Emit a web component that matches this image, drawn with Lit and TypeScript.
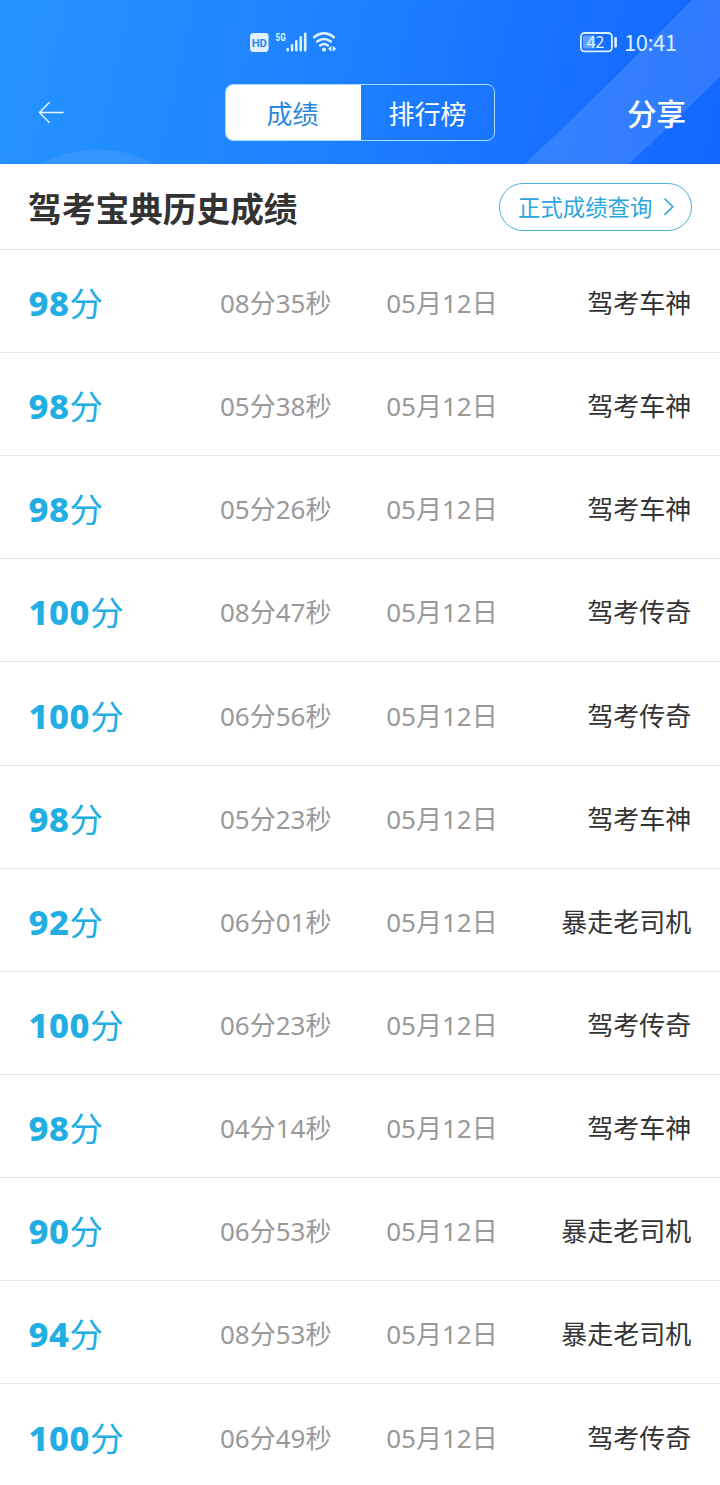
import { LitElement, html, css } from "lit";
import { customElement, property, state } from "lit/decorators.js";

interface Exam {
  score: number;
  time: string;
  date: string;
  title: string;
}

const DATE = "05月12日";
const GOD = "驾考车神";
const LEGEND = "驾考传奇";
const DRIVER = "暴走老司机";

const EXAMS: Exam[] = [
  { score: 98, time: "08分35秒", date: DATE, title: GOD },
  { score: 98, time: "05分38秒", date: DATE, title: GOD },
  { score: 98, time: "05分26秒", date: DATE, title: GOD },
  { score: 100, time: "08分47秒", date: DATE, title: LEGEND },
  { score: 100, time: "06分56秒", date: DATE, title: LEGEND },
  { score: 98, time: "05分23秒", date: DATE, title: GOD },
  { score: 92, time: "06分01秒", date: DATE, title: DRIVER },
  { score: 100, time: "06分23秒", date: DATE, title: LEGEND },
  { score: 98, time: "04分14秒", date: DATE, title: GOD },
  { score: 90, time: "06分53秒", date: DATE, title: DRIVER },
  { score: 94, time: "08分53秒", date: DATE, title: DRIVER },
  { score: 100, time: "06分49秒", date: DATE, title: LEGEND },
];

@customElement("status-bar")
class StatusBar extends LitElement {
  static styles = css`
    :host {
      display: flex;
      justify-content: space-between;
      height: 84px;
      padding: 0 43px 0 248px;
      box-sizing: border-box;
    }
    svg {
      display: block;
    }
    .right {
      display: flex;
    }
    .clock {
      width: 53px;
      margin: 26px 0 0 6px;
      font-family: "Noto Sans CJK SC", sans-serif;
      font-size: 22px;
      letter-spacing: -0.5px;
      line-height: 30px;
      white-space: nowrap;
      color: #d9efff;
    }
    .hd {
      font: 700 10.5px "Roboto", sans-serif;
      fill: #2c86f5;
    }
    .gen {
      font: 700 10.5px "Roboto", sans-serif;
      fill: #e0f2ff;
    }
    .level {
      font: 400 15.5px "Noto Sans", sans-serif;
      fill: #e6f5ff;
    }
  `;
  render() {
    return html`
      <svg width="92" height="84" viewBox="248 0 92 84" fill="none" stroke="#e0f2ff">
        <rect x="250" y="33" width="18.6" height="19" rx="3.4" fill="#e0f2ff" stroke="none" />
        <text class="hd" stroke="none" x="251.7" y="46.7" textLength="15.2" lengthAdjust="spacingAndGlyphs">HD</text>
        <text class="gen" stroke="none" x="275.6" y="40.8" textLength="10.2" lengthAdjust="spacingAndGlyphs">5G</text>
        <g stroke-width="2.6" stroke-linecap="round">
          <path d="M287.7 49.3V50.2M292 45.2V50.2M296.3 41.2V50.2M300.7 37.2V50.2M305.2 33.7V50.2" />
        </g>
        <g stroke-width="2.4" stroke-linecap="round">
          <path d="M314 37.2Q324 29.4 334 37.2" />
          <path d="M317.2 41.5Q324 36.3 330.8 41.5" />
          <path d="M320.2 45.5Q324 42.6 327.8 45.5" />
        </g>
        <circle cx="324" cy="49.6" r="2.1" fill="#e0f2ff" stroke="none" />
        <path d="M328 48.8L331.4 45.8V51.8ZM336.2 48.8L332.8 45.8V51.8Z" fill="#e0f2ff" stroke="none" />
      </svg>
      <div class="right">
        <svg width="39" height="84" viewBox="579 0 39 84">
          <rect x="580.9" y="33" width="31" height="18.4" rx="3.6" fill="none" stroke="#d9efff" stroke-width="1.8" />
          <rect x="583" y="35.6" width="12" height="13" rx="1.5" fill="#5fa2ff" />
          <rect x="614.3" y="37" width="2.6" height="10.6" rx="1.2" fill="#e0f2ff" />
          <text class="level" x="586.8" y="47.8" textLength="17.4" lengthAdjust="spacingAndGlyphs">42</text>
        </svg>
        <span class="clock">10:41</span>
      </div>
    `;
  }
}

@customElement("top-header")
class TopHeader extends LitElement {
  @state() tab = 0;
  static styles = css`
    :host {
      display: block;
      position: relative;
      height: 164px;
      overflow: hidden;
      background: linear-gradient(103deg, #2594ff 0%, #1f84ff 40%, #1974ff 70%, #1367ff 100%);
      color: #fff;
    }
    .decor {
      position: absolute;
      inset: 0;
    }
    .content {
      position: relative;
    }
    .nav {
      display: grid;
      grid-template-columns: 1fr auto 1fr;
      padding: 0 34px 0 38px;
    }
    .back {
      display: block;
      margin-top: 16px;
    }
    .tabs {
      display: grid;
      grid-template-columns: 135px 1fr;
      box-sizing: border-box;
      width: 270px;
      height: 57px;
      border: 1.4px solid #a6dcff;
      border-radius: 8px;
      overflow: hidden;
      margin-left: -4px;
    }
    .tab {
      text-align: center;
      font-size: 26px;
      line-height: 58px;
    }
    .tab.active {
      background: #fff;
      color: #2a86de;
      padding-right: 2px;
    }
    .share {
      text-align: right;
      font-size: 29.5px;
      font-weight: 500;
      line-height: 59px;
      white-space: nowrap;
    }
  `;
  render() {
    return html`
      <svg class="decor" width="720" height="164" viewBox="0 0 720 164" fill="#fff">
        <circle cx="98" cy="268.5" r="119" fill-opacity="0.08" />
        <path d="M692 0H720V77Q675 121 629 164H525Q560 131 610 82Z" fill-opacity="0.12" />
      </svg>
      <div class="content">
        <status-bar></status-bar>
        <div class="nav">
          <svg class="back" width="28" height="26" viewBox="0 0 28 26" fill="none" stroke="#e6f7ff" stroke-width="1.4">
            <path d="M11.5 2.2L1.5 12.5L11.5 22.8M1.5 12.5H25.6" />
          </svg>
          <div class="tabs">
            ${["成绩", "排行榜"].map(
              (t, i) => html`<div class="tab ${i === this.tab ? "active" : ""}" @click=${() => (this.tab = i)}>${t}</div>`
            )}
          </div>
          <div class="share">分享</div>
        </div>
      </div>
    `;
  }
}

@customElement("exam-row")
class ExamRow extends LitElement {
  @property({ attribute: false }) exam!: Exam;
  static styles = css`
    :host {
      display: grid;
      grid-template-columns: 191.5px 166.2px 1fr auto;
      align-items: center;
      box-sizing: border-box;
      height: 103.15px;
      padding: 4px 28.8px 0 28.5px;
      border-bottom: 1px solid #e8e8e8;
      line-height: 40px;
      font-size: 26px;
      color: #999;
    }
    .score {
      display: flex;
      align-items: baseline;
      color: #22aee3;
      font-size: 33.5px;
    }
    .num {
      font-weight: 800;
      font-size: 34.5px;
      letter-spacing: 0.6px;
    }
    .title {
      color: #333;
    }
  `;
  render() {
    const e = this.exam;
    return html`
      <div class="score"><span class="num">${e.score}</span><span>分</span></div>
      <div>${e.time}</div>
      <div>${e.date}</div>
      <div class="title">${e.title}</div>
    `;
  }
}

@customElement("app-root")
class AppRoot extends LitElement {
  static styles = css`
    :host {
      display: block;
      height: 1485px;
      overflow: hidden;
      background: #fff;
      font-family: "Noto Sans", "Noto Sans CJK SC", sans-serif;
    }
    .heading {
      display: flex;
      justify-content: space-between;
      align-items: center;
      box-sizing: border-box;
      height: 85.9px;
      padding: 1px 28px 0;
      border-bottom: 1px solid #e6e6e6;
    }
    .name {
      font-size: 33.7px;
      font-weight: 700;
      line-height: 48px;
      color: #333;
      padding-top: 5px;
    }
    .query {
      display: flex;
      align-items: center;
      justify-content: space-between;
      box-sizing: border-box;
      width: 193px;
      height: 48px;
      padding: 0 16px 0 18px;
      border: 1px solid #4cb2de;
      border-radius: 24px;
      font-size: 22.4px;
      color: #2da6e0;
    }
  `;
  render() {
    return html`
      <top-header></top-header>
      <div class="heading">
        <div class="name">驾考宝典历史成绩</div>
        <div class="query">
          <span>正式成绩查询</span>
          <svg width="12" height="20" viewBox="0 0 12 20" fill="none" stroke="#36a9de" stroke-width="1.7">
            <path d="M1.5 1.5L9.8 9.7L1.5 17.9" />
          </svg>
        </div>
      </div>
      ${EXAMS.map((e) => html`<exam-row .exam=${e}></exam-row>`)}
    `;
  }
}
